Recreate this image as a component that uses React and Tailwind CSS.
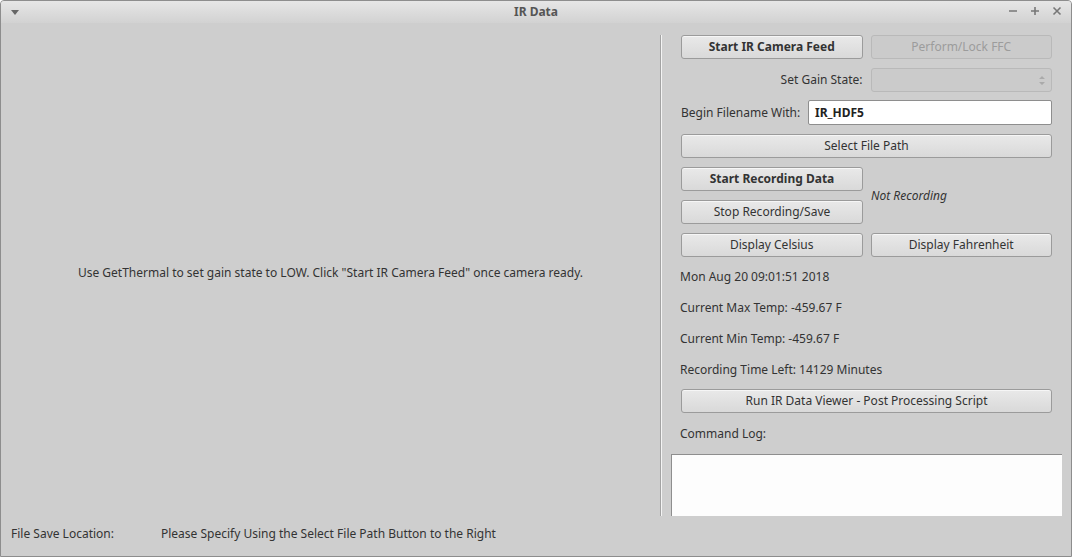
export default function App() {
  const btn =
    "flex h-6 items-center justify-center rounded-[3px] border border-[#9b9b9b] bg-gradient-to-b from-[#e9e9e9] to-[#d9d9d9] text-[12px] text-[#333] shadow-[inset_0_1px_0_rgba(255,255,255,0.6)]";
  const label = "flex h-[31px] items-center text-[12px] text-[#333]";

  return (
    <div className="flex h-[557px] w-[1072px] flex-col overflow-hidden rounded-t-[4px] border border-[#8d8d8d] bg-[#cecece] font-['Noto_Sans',sans-serif]">
      <div className="relative flex h-[22px] shrink-0 items-center justify-center bg-gradient-to-b from-[#e6e6e6] to-[#d2d2d2]">
        <svg className="absolute left-[10px] top-[9px]" width="8" height="5" viewBox="0 0 8 5">
          <path d="M0 0h8L4 5z" fill="#666" />
        </svg>
        <span className="text-[12px] font-bold text-[#555]">IR Data</span>
        <div className="absolute right-[9px] top-[5px] flex items-center gap-[12px] text-[#777]">
          <svg width="10" height="10" viewBox="0 0 10 10">
            <path d="M1 5h8" stroke="#777" strokeWidth="1.6" />
          </svg>
          <svg width="10" height="10" viewBox="0 0 10 10">
            <path d="M1 5h8M5 1v8" stroke="#777" strokeWidth="1.6" />
          </svg>
          <svg width="10" height="10" viewBox="0 0 10 10">
            <path d="M1.5 1.5l7 7M8.5 1.5l-7 7" stroke="#777" strokeWidth="1.6" />
          </svg>
        </div>
      </div>

      <div className="flex flex-1 pt-[12px]">
        <div className="flex flex-1 items-center justify-center pb-[6px]">
          <span className="text-[12px] text-[#333]">
            Use GetThermal to set gain state to LOW. Click "Start IR Camera Feed" once camera ready.
          </span>
        </div>
        <div className="flex h-[481px] w-[2px] shrink-0">
          <div className="w-px bg-[#a3a3a3]" />
          <div className="w-px bg-[#f4f4f4]" />
        </div>
        <div className="ml-[9px] mr-[9px] flex w-[391px] flex-col">
          <div className="flex flex-col gap-[9px] px-[10px]">
            <div className="grid grid-cols-2 gap-[8px]">
              <div className={btn + " font-bold"}>Start IR Camera Feed</div>
              <div className="flex h-6 items-center justify-center rounded-[3px] border border-[#b9b9b9] bg-[#cbcbcb] text-[12px] text-[#9c9c9c]">
                Perform/Lock FFC
              </div>
            </div>
            <div className="grid grid-cols-2 gap-[8px]">
              <div className="flex h-6 items-center justify-end text-[12px] text-[#333]">Set Gain State:</div>
              <div className="relative h-6 rounded-[3px] border border-[#b9b9b9] bg-[#cbcbcb]">
                <svg className="absolute right-[6px] top-[6px]" width="6" height="11" viewBox="0 0 6 11">
                  <path d="M0 4l3-3 3 3zM0 7l3 3 3-3z" fill="#aaa" />
                </svg>
              </div>
            </div>
            <div className="-mt-px flex h-[25px] items-center">
              <span className="w-[127px] shrink-0 text-[12px] text-[#333]">Begin Filename With:</span>
              <div className="flex h-[25px] flex-1 items-center rounded-[2px] border border-[#8e8e8e] bg-white pl-[6px] text-[12px] font-bold text-[#222]">
                IR_HDF5
              </div>
            </div>
            <div className={btn}>Select File Path</div>
            <div className="flex items-center gap-[8px]">
              <div className="flex w-[182px] shrink-0 flex-col gap-[9px]">
                <div className={btn + " font-bold"}>Start Recording Data</div>
                <div className={btn}>Stop Recording/Save</div>
              </div>
              <span className="text-[12px] italic text-[#333]">Not Recording</span>
            </div>
            <div className="grid grid-cols-2 gap-[8px]">
              <div className={btn}>Display Celsius</div>
              <div className={btn}>Display Fahrenheit</div>
            </div>
          </div>
          <div className="mt-[4px] flex flex-col px-[9px]">
            <div className={label}>Mon Aug 20 09:01:51 2018</div>
            <div className={label}>Current Max Temp: -459.67 F</div>
            <div className={label}>Current Min Temp: -459.67 F</div>
            <div className={label}>Recording Time Left: 14129 Minutes</div>
          </div>
          <div className="mt-[4px] px-[10px]">
            <div className={btn}>Run IR Data Viewer - Post Processing Script</div>
          </div>
          <div className={label + " mt-[5px] px-[9px]"}>Command Log:</div>
          <div className="mt-[5px] h-[62px] border-l border-t border-[#8e8e8e] bg-[#fdfdfd]" />
        </div>
      </div>

      <div className="flex h-[40px] shrink-0 items-center pb-[4px] pl-[10px] text-[12px] text-[#333]">
        <span className="w-[150px]">File Save Location:</span>
        <span>Please Specify Using the Select File Path Button to the Right</span>
      </div>
    </div>
  );
}
